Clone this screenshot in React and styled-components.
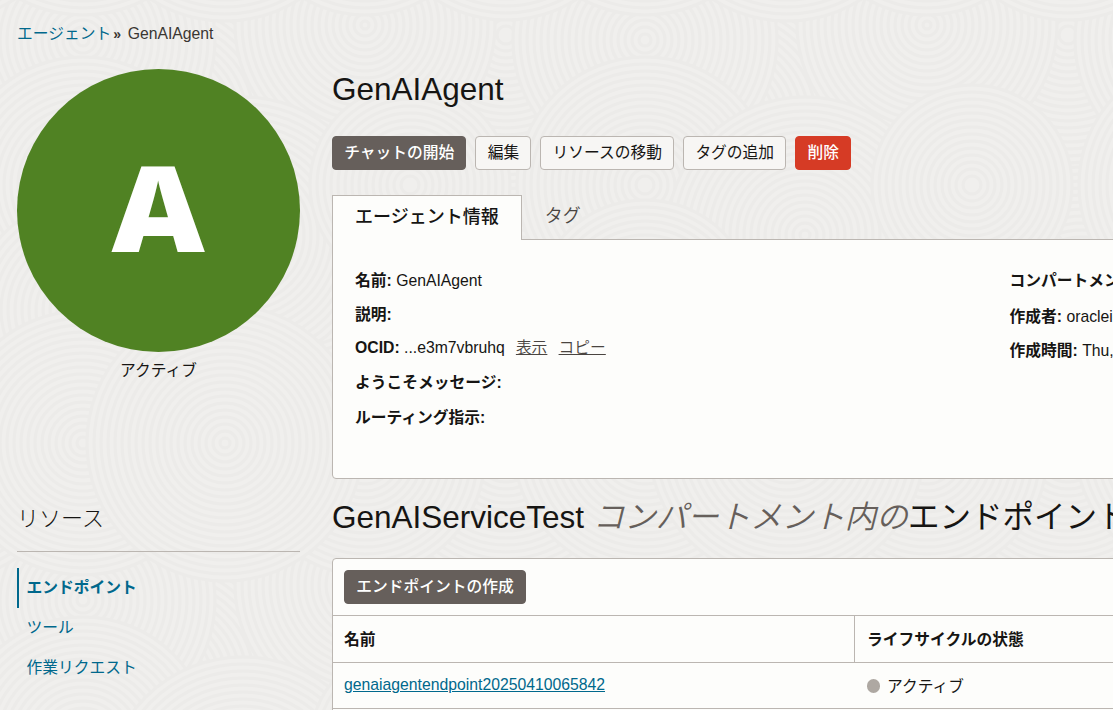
import React from 'react'
import styled, { createGlobalStyle } from 'styled-components'

const GlobalStyle = createGlobalStyle`
  * { box-sizing: border-box; }
  html, body { margin: 0; padding: 0; overflow: hidden; }
  body {
    background: #f0eeed;
    font-family: "Liberation Sans", Arial, "Noto Sans CJK JP", sans-serif;
    font-size: 15.75px;
    line-height: 24px;
    color: #161513;
  }
  ul, h1, h2, h3, dl, dd { margin: 0; padding: 0; list-style: none; font-weight: normal; }
`

// x, y, radius of each swirl, back to front
const swirls = [
  [445, 150, 150], [160, 120, 150], [520, 300, 140], [385, 320, 140],
  [506, 35, 128], [83, 40, 132], [365, 25, 130],
  [83, 185, 128], [243, 235, 138], [410, 185, 100],
  [506, 450, 130], [365, 455, 120], [83, 310, 110],
  [83, 443, 132], [225, 443, 138],
]

const rings = (max) => {
  const list = []
  for (let r = max; r > 3; r -= 7) list.push(r)
  return list
}

const Swirl = ({ x, y, max }) => (
  <g transform={`translate(${x} ${y})`}>
    {rings(max).map((r) => <circle key={r} r={r} fill="#f0efed" />)}
  </g>
)

const Texture = () => (
  <TextureSvg aria-hidden="true">
    <defs>
      <pattern id="swirls" width="562" height="560" patternUnits="userSpaceOnUse">
        <g stroke="#ecebe9" strokeWidth="3">
          {swirls.map(([x, y, max]) => (
            [-560, 0, 560].map((dy) => [-562, 0, 562].map((dx) => (
              <Swirl key={`${x},${y},${dx},${dy}`} x={x + dx} y={y + dy} max={max} />
            )))
          ))}
        </g>
      </pattern>
    </defs>
    <rect width="100%" height="100%" fill="url(#swirls)" />
  </TextureSvg>
)

const actions = [
  { label: 'チャットの開始', kind: 'primary' },
  { label: '編集' },
  { label: 'リソースの移動' },
  { label: 'タグの追加' },
  { label: '削除', kind: 'danger' },
]

const App = () => {
  return (
    <Page>
      <GlobalStyle />
      <Texture />
      <Breadcrumb>
        <a>エージェント</a><i>»</i><span>GenAIAgent</span>
      </Breadcrumb>
      <Columns>
        <Sidebar>
          <Avatar><span>A</span></Avatar>
          <Status>アクティブ</Status>
          <SideTitle>リソース</SideTitle>
          <ul>
            <SideItem $active>エンドポイント</SideItem>
            <SideItem>ツール</SideItem>
            <SideItem>作業リクエスト</SideItem>
          </ul>
        </Sidebar>
        <Main>
          <Title>GenAIAgent</Title>
          <Actions>
            {actions.map((a) => <Button key={a.label} $kind={a.kind}>{a.label}</Button>)}
          </Actions>
          <Tabs>
            <Tab $active>エージェント情報</Tab>
            <Tab>タグ</Tab>
          </Tabs>
          <InfoPanel>
            <InfoColumn>
              <Info $h={34}><b>名前:</b> GenAIAgent</Info>
              <Info $h={33}><b>説明:</b></Info>
              <Info $h={35}>
                <b>OCID:</b> ...e3m7vbruhq
                <TextLink>表示</TextLink>
                <TextLink>コピー</TextLink>
              </Info>
              <Info $h={35}><b>ようこそメッセージ:</b></Info>
              <Info $h={34}><b>ルーティング指示:</b></Info>
            </InfoColumn>
            <InfoColumn>
              <Info $h={36}><b>コンパートメント:</b> GenAIServiceTest</Info>
              <Info $h={34}><b>作成者:</b> oracleidentitycloudservice</Info>
              <Info $h={34}><b>作成時間:</b> Thu, Apr 10, 2025</Info>
            </InfoColumn>
          </InfoPanel>
          <ListTitle>GenAIServiceTest <em>コンパートメント内の</em>エンドポイント</ListTitle>
          <TablePanel>
            <Toolbar>
              <Button $kind="primary">エンドポイントの作成</Button>
            </Toolbar>
            <Row $head>
              <Cell>名前</Cell>
              <Cell>ライフサイクルの状態</Cell>
            </Row>
            <Row>
              <Cell><a>genaiagentendpoint20250410065842</a></Cell>
              <Cell><Dot />アクティブ</Cell>
            </Row>
          </TablePanel>
        </Main>
      </Columns>
    </Page>
  )
}

export default App

const Page = styled.div`
  position: relative;
  width: 100%;
  height: 710px;
  overflow: hidden;
  isolation: isolate;
`

const TextureSvg = styled.svg`
  position: absolute;
  inset: 0;
  width: 100%;
  height: 100%;
  z-index: -1;
`

const Breadcrumb = styled.nav`
  display: flex;
  height: 69px;
  padding: 22px 0 0 17px;
  color: #3a3632;
  a { color: #00688c; }
  i {
    width: 16.5px;
    padding-left: 2px;
    font-style: normal;
    font-size: 14px;
    font-weight: bold;
  }
`

const Columns = styled.div`
  display: flex;
  padding-left: 17px;
`

const Sidebar = styled.aside`
  flex: none;
  width: 283px;
  margin-right: 32px;
`

const Avatar = styled.div`
  width: 283px;
  height: 283px;
  border-radius: 50%;
  background: #508223;
  color: #fff;
  font: 800 119px/275px "Open Sans", sans-serif;
  text-align: center;
  span { display: inline-block; transform: scaleX(1.08); }
`

const Status = styled.div`
  height: 148px;
  padding-top: 7px;
  text-align: center;
`

const SideTitle = styled.h3`
  height: 52px;
  margin-bottom: 16px;
  border-bottom: 1px solid #bbb6b1;
  font-size: 22px;
  line-height: 38px;
  font-weight: 300;
`

const SideItem = styled.li`
  height: 40px;
  padding-left: ${props => props.$active ? '7.5px' : '9.5px'};
  border-left: ${props => props.$active ? '2px solid #00688c' : 'none'};
  line-height: 40px;
  font-weight: ${props => props.$active ? 'bold' : 'normal'};
  color: #00688c;
`

const Main = styled.main`
  flex: none;
  width: 1340px;
`

const Title = styled.h1`
  height: 67px;
  font-size: 31.5px;
  line-height: 40px;
`

const Actions = styled.div`
  display: flex;
  gap: 9px;
  height: 59px;
`

const Button = styled.button`
  height: 34px;
  padding: 0 11.2px;
  border: 1px solid #bbb6b1;
  border-radius: 4px;
  background: #f7f6f4;
  color: #161513;
  font: inherit;
  line-height: 30px;
  white-space: nowrap;
  ${props => props.$kind === 'primary' && 'background: #665f5b; border-color: #665f5b; color: #fff; font-weight: 500;'}
  ${props => props.$kind === 'danger' && 'background: #d63b25; border-color: #d63b25; color: #fff; font-weight: 500;'}
`

const Tabs = styled.div`
  display: flex;
  height: 45px;
  margin-bottom: -1px;
`

const Tab = styled.div`
  position: relative;
  height: 45px;
  padding: 0 22px;
  border: 1px solid ${props => props.$active ? '#bbb6b1' : 'transparent'};
  border-bottom: none;
  background: ${props => props.$active ? '#fdfdfb' : 'transparent'};
  color: ${props => props.$active ? '#161513' : '#4a4541'};
  font-size: 18px;
  font-weight: ${props => props.$active ? 500 : 350};
  line-height: ${props => props.$active ? 42 : 40}px;
`

const InfoPanel = styled.section`
  display: flex;
  height: 240px;
  padding: 29px 22px 0;
  border: 1px solid #bbb6b1;
  border-radius: 0 0 4px 4px;
  background: #fdfdfb;
`

const InfoColumn = styled.div`
  flex: none;
  width: 654.5px;
`

const Info = styled.div`
  height: ${props => props.$h}px;
  white-space: nowrap;
`

const TextLink = styled.a`
  margin-left: 11.2px;
  color: #4a4541;
  font-weight: 350;
  text-decoration: underline;
`

const ListTitle = styled.h2`
  height: 79px;
  font-size: 31.5px;
  line-height: 76px;
  white-space: nowrap;
  em { color: #665f5b; font-weight: 350; }
`

const TablePanel = styled.section`
  min-height: 200px;
  border: 1px solid #bbb6b1;
  border-radius: 4px;
  background: #fdfdfb;
`

const Toolbar = styled.div`
  height: 56px;
  padding: 11px;
`

const Row = styled.div`
  display: flex;
  height: 47px;
  border-top: 1px solid #bbb6b1;
  font-weight: ${props => props.$head ? 'bold' : 'normal'};
  > div + div {
    padding-left: 12px;
    border-left: 1px solid ${props => props.$head ? '#bbb6b1' : 'transparent'};
  }
  &:last-child { border-bottom: 1px solid #bbb6b1; }
`

const Cell = styled.div`
  display: flex;
  align-items: center;
  width: 521px;
  padding: 2px 0 0 11px;
  a { padding-bottom: 3px; color: #00688c; text-decoration: underline; }
`

const Dot = styled.span`
  width: 13.5px;
  height: 13.5px;
  margin: 0 7px 1px -0.5px;
  border-radius: 50%;
  background: #aea8a2;
`
